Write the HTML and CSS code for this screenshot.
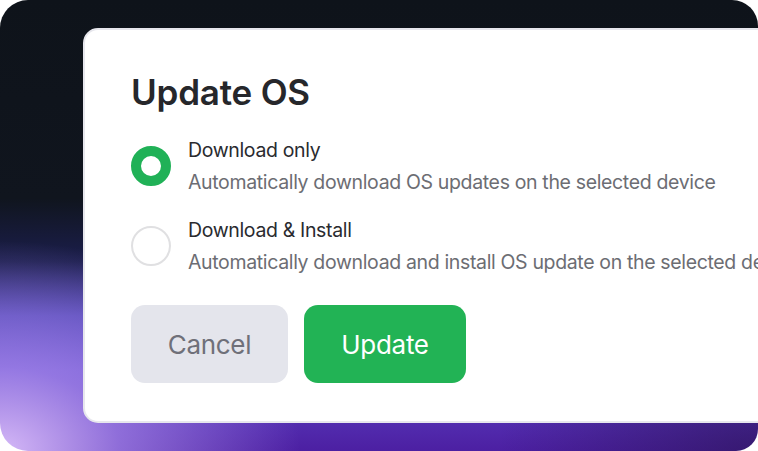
FILE: index.html
```html
<!DOCTYPE html>
<html lang="en">
<head>
<meta charset="utf-8">
<title>Update OS</title>
<link rel="stylesheet" href="styles.css">
</head>
<body>
<div class="stage">
  <div class="dialog">
    <h1 class="title">Update OS</h1>
    <div class="options">
      <div class="option">
        <span class="radio radio-on"></span>
        <div class="option-text">
          <div class="label">Download only</div>
          <div class="desc">Automatically download OS updates on the selected device</div>
        </div>
      </div>
      <div class="option">
        <span class="radio"></span>
        <div class="option-text">
          <div class="label">Download &amp; Install</div>
          <div class="desc">Automatically download and install OS update on the selected device</div>
        </div>
      </div>
    </div>
    <div class="actions">
      <button class="btn btn-cancel">Cancel</button>
      <button class="btn btn-update">Update</button>
    </div>
  </div>
</div>
</body>
</html>
```

FILE: styles.css
```css
html, body {
  margin: 0;
  padding: 0;
  background: #ffffff;
}
body {
  width: 758px;
  height: 451px;
  overflow: hidden;
  font-family: Inter, "Noto Sans", sans-serif;
}
.stage {
  box-sizing: border-box;
  width: 758px;
  height: 451px;
  border-radius: 28px 26px 22px 28px;
  overflow: hidden;
  padding: 28px 0 0 83px;
  background:
    radial-gradient(ellipse 300px 210px at 0% 100%, rgba(214,186,248,1) 0%, rgba(170,140,238,0.7) 40%, rgba(120,90,215,0) 100%),
    radial-gradient(ellipse 260px 140px at 100% 100%, rgba(40,20,80,0.6) 0%, rgba(40,20,80,0) 100%),
    linear-gradient(180deg, #0e131a 0%, #10151e 44%, #1b1e4c 58%, #4a40b0 70%, #5e46c6 82%, #4c1fa2 100%);
}
.dialog {
  box-sizing: border-box;
  width: 760px;
  height: 395px;
  background: #ffffff;
  border: 2px solid #e7e7ed;
  border-radius: 15px;
  padding: 42px 0 0 46px;
  display: flex;
  flex-direction: column;
}
.title {
  margin: 0;
  font-size: 35px;
  line-height: 40px;
  font-weight: 600;
  color: #26272b;
  letter-spacing: -0.2px;
}
.options {
  margin-top: 22px;
  display: flex;
  flex-direction: column;
  gap: 16px;
}
.option {
  display: flex;
  align-items: center;
  gap: 17px;
}
.radio {
  box-sizing: border-box;
  flex: none;
  width: 40px;
  height: 40px;
  border-radius: 50%;
  border: 2px solid #e0e0e2;
  background: #ffffff;
}
.radio-on {
  border: 10px solid #20b157;
}
.option-text {
  white-space: nowrap;
}
.label {
  font-size: 19.5px;
  line-height: 32px;
  letter-spacing: -0.35px;
  color: #2a2b2f;
}
.desc {
  font-size: 19.5px;
  line-height: 32px;
  letter-spacing: -0.35px;
  color: #6c6d73;
}
.actions {
  margin-top: 27px;
  display: flex;
  gap: 16px;
}
.btn {
  height: 78px;
  border: none;
  border-radius: 14px;
  font-family: Inter, "Noto Sans", sans-serif;
  font-size: 26px;
  font-weight: 400;
  letter-spacing: -0.3px;
  padding: 0;
}
.btn-cancel {
  width: 157px;
  background: #e4e5ec;
  color: #6f7079;
}
.btn-update {
  width: 162px;
  background: #22b355;
  color: #ffffff;
}
```
